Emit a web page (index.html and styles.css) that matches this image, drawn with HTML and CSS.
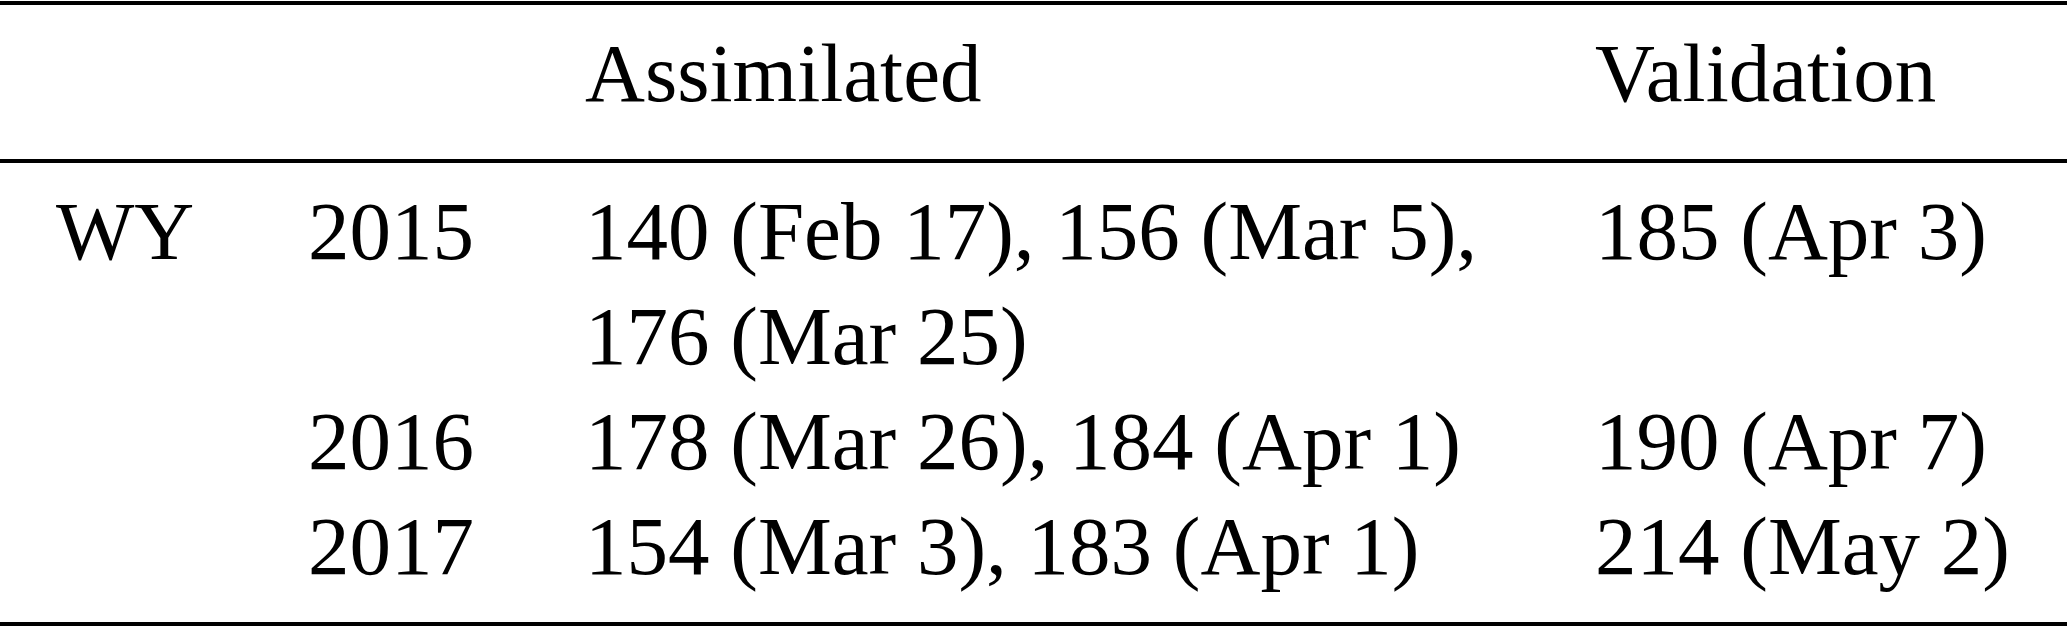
FILE: index.html
```html
<!DOCTYPE html>
<html lang="en">
<head>
<meta charset="utf-8">
<title>Table</title>
<link rel="stylesheet" href="styles.css">
</head>
<body>
<div class="table">
  <div class="row head">
    <div class="cell"></div>
    <div class="cell"></div>
    <div class="cell">Assimilated</div>
    <div class="cell">Validation</div>
  </div>
  <div class="body">
    <div class="row">
      <div class="cell">WY</div>
      <div class="cell">2015</div>
      <div class="cell">140 (Feb 17), 156 (Mar 5),<br>176 (Mar 25)</div>
      <div class="cell">185 (Apr 3)</div>
    </div>
    <div class="row">
      <div class="cell"></div>
      <div class="cell">2016</div>
      <div class="cell">178 (Mar 26), 184 (Apr 1)</div>
      <div class="cell">190 (Apr 7)</div>
    </div>
    <div class="row">
      <div class="cell"></div>
      <div class="cell">2017</div>
      <div class="cell">154 (Mar 3), 183 (Apr 1)</div>
      <div class="cell">214 (May 2)</div>
    </div>
  </div>
</div>
</body>
</html>
```

FILE: styles.css
```css
html, body {
  margin: 0;
  padding: 0;
  background: #ffffff;
}

.table {
  width: 2067px;
  margin-top: 1px;
  border-top: 4px solid #000;
  border-bottom: 4px solid #000;
  font-family: "Liberation Serif", "Times New Roman", serif;
  font-size: 83px;
  line-height: 105px;
  color: #000;
}

.head {
  padding-top: 16px;
  padding-bottom: 33px;
  border-bottom: 4px solid #000;
}

.body {
  padding-top: 16px;
  padding-bottom: 23px;
}

.row {
  display: grid;
  grid-template-columns: 252px 277px 1010px auto;
  padding-left: 56px;
}

.cell {
  white-space: nowrap;
}
```
